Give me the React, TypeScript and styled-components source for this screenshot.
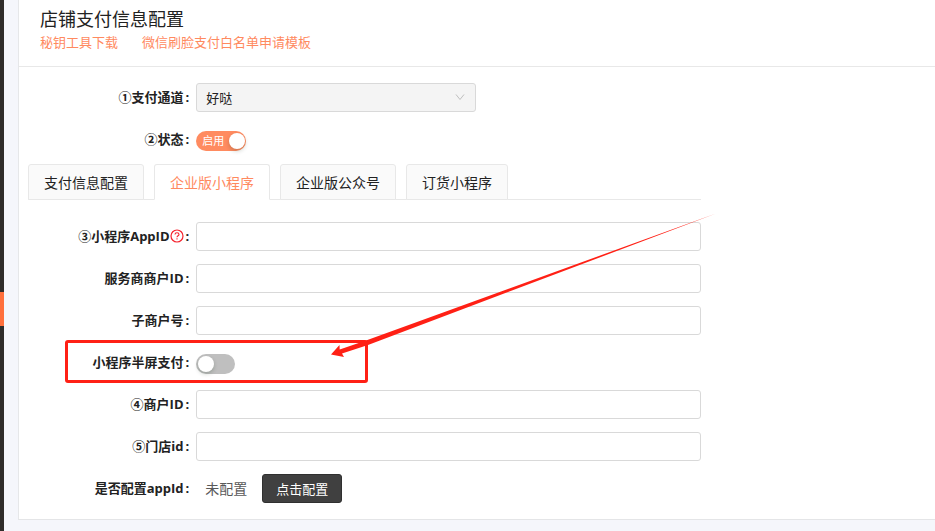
import React, { useState } from "react";
import styled, { createGlobalStyle } from "styled-components";

const GlobalStyle = createGlobalStyle`
  * { box-sizing: border-box; }
  body {
    margin: 0;
    background: #f5f6fb;
    color: #222;
    font-family: "Open Sans", "Noto Sans CJK SC", sans-serif;
    font-size: 13px;
    line-height: 20px;
  }
  button, input, select { font: inherit; }
`;

const Page = styled.div`
  display: flex;
  min-height: 100vh;
`;

const Rail = styled.nav`
  flex: 0 0 4px;
  padding-top: 292px;
  background: #2f2c2a;
`;

const RailMarker = styled.div`
  height: 34px;
  background: #ff6f3c;
`;

const Main = styled.main`
  flex: 1;
  min-width: 0;
  padding-left: 14px;
`;

const Card = styled.section`
  background: #fff;
  border-left: 1px solid #e6e7e9;
  border-bottom: 1px solid #e4e5e7;
`;

const CardHeader = styled.header`
  padding: 7px 21px 14px;
  border-bottom: 1px solid #e8e8e8;
`;

const Title = styled.h1`
  margin: 0;
  font-size: 18px;
  line-height: 25px;
  font-weight: 400;
`;

const Links = styled.div`
  display: flex;
  gap: 24px;
`;

const Link = styled.a`
  color: #ff8a5f;
  text-decoration: none;
`;

const Form = styled.form`
  max-width: 682px;
  padding: 10px 0 9px 9px;
`;

const Row = styled.div`
  position: relative;
  display: grid;
  grid-template-columns: 25% 1fr;
  padding: 6px 0 7px;
`;

const Label = styled.label`
  display: flex;
  justify-content: flex-end;
  align-items: center;
  height: 28px;
  padding-right: 7px;
  font-weight: 700;
  white-space: nowrap;

  &::after {
    content: ":";
    margin-left: 2px;
  }
`;

const Control = styled.div`
  display: flex;
  align-items: center;
  min-height: 29px;
`;

const TextInput = styled.input`
  width: 100%;
  height: 29px;
  padding: 0 9px;
  border: 1px solid #d9d9d9;
  border-radius: 3px;
  background: #fff;
  outline: none;
`;

const SelectBox = styled.div`
  position: relative;
  width: 280px;
`;

const Select = styled.select`
  display: block;
  width: 100%;
  height: 29px;
  padding: 0 30px 0 9px;
  border: 1px solid #d9d9d9;
  border-radius: 3px;
  background: #f4f4f4;
  color: #222;
  opacity: 1;
  appearance: none;
`;

const SelectArrow = styled.svg`
  position: absolute;
  top: 9px;
  right: 11px;
  pointer-events: none;
`;

const Switch = styled.span<{ $wide?: boolean }>`
  position: relative;
  display: inline-flex;
  width: ${(p) => (p.$wide ? 50 : 39)}px;
  height: 20px;
  margin-top: 2px;
`;

const SwitchInput = styled.input`
  appearance: none;
  width: 100%;
  height: 100%;
  margin: 0;
  border-radius: 10px;
  background: #bfbfbf;
  cursor: pointer;

  &:checked { background: #ff8b60; }

  &::after {
    content: "";
    position: absolute;
    top: 2px;
    left: 2px;
    width: 16px;
    height: 16px;
    border-radius: 50%;
    background: #fff;
    box-shadow: 0 2px 4px rgba(0, 35, 11, 0.2);
  }

  &:checked::after {
    left: auto;
    right: 1px;
  }
`;

const SwitchText = styled.span`
  position: absolute;
  left: 6px;
  top: 0;
  color: #fff;
  font-size: 11px;
  pointer-events: none;
`;

const Tabs = styled.div`
  display: flex;
  gap: 10px;
  margin: 3px 0 16px;
  box-shadow: inset 0 -1px #e8e8e8;
`;

const Tab = styled.button<{ $active: boolean }>`
  height: 36px;
  padding: 1px 15px 0;
  border: 1px solid #e8e8e8;
  border-bottom-color: ${(p) => (p.$active ? "#fff" : "#e8e8e8")};
  border-radius: 3px 3px 0 0;
  background: ${(p) => (p.$active ? "#fff" : "#fafafa")};
  color: ${(p) => (p.$active ? "#ff8a5f" : "#222")};
  font-size: 14px;
  white-space: nowrap;
  cursor: pointer;
`;

const StatusText = styled.span`
  padding: 0 15px 0 9px;
  color: #595959;
  font-size: 14px;
`;

const DarkButton = styled.button`
  height: 29px;
  padding: 0 13px;
  border: 1px solid #303030;
  border-radius: 3px;
  background: #404040;
  color: #fff;
  cursor: pointer;
`;

const Highlight = styled.div`
  position: absolute;
  top: -2px;
  left: 37px;
  width: 303px;
  height: 43px;
  border: 3px solid #ff2015;
  border-radius: 3px;
  pointer-events: none;
`;

const Pointer = styled.svg`
  position: absolute;
  left: 302px;
  bottom: 26px;
  pointer-events: none;
`;

const HelpIcon = () => (
  <svg width="14" height="14" viewBox="0 0 14 14" fill="none" stroke="#f5222d" aria-label="帮助">
    <circle cx="7" cy="7" r="6" strokeWidth="1.2" />
    <path d="M5 5.5C5 4.4 5.8 3.7 7 3.7s2 .7 2 1.7c0 1.4-2 1.4-2 2.9M7 9.3v1.2" strokeWidth="1.1" />
  </svg>
);

const tabs = ["支付信息配置", "企业版小程序", "企业版公众号", "订货小程序"];

function Field({ id, label, help }: { id: string; label: string; help?: boolean }) {
  return (
    <Row>
      <Label htmlFor={id}>
        {label}
        {help && <HelpIcon />}
      </Label>
      <Control>
        <TextInput id={id} type="text" />
      </Control>
    </Row>
  );
}

export default function App() {
  const [active, setActive] = useState(1);
  const [enabled, setEnabled] = useState(true);
  const [halfScreen, setHalfScreen] = useState(false);

  return (
    <>
      <GlobalStyle />
      <Page>
        <Rail>
          <RailMarker />
        </Rail>
        <Main>
          <Card>
            <CardHeader>
              <Title>店铺支付信息配置</Title>
              <Links>
                <Link href="#tool">秘钥工具下载</Link>
                <Link href="#template">微信刷脸支付白名单申请模板</Link>
              </Links>
            </CardHeader>
            <Form onSubmit={(e) => e.preventDefault()}>
              <Row>
                <Label htmlFor="channel">①支付通道</Label>
                <Control>
                  <SelectBox>
                    <Select id="channel" disabled>
                      <option>好哒</option>
                    </Select>
                    <SelectArrow width="10" height="10" viewBox="0 0 10 10" fill="none" stroke="#bfbfbf">
                      <path d="M1 2.5l4 5 4-5" />
                    </SelectArrow>
                  </SelectBox>
                </Control>
              </Row>
              <Row>
                <Label htmlFor="status">②状态</Label>
                <Control>
                  <Switch $wide>
                    <SwitchInput
                      id="status"
                      type="checkbox"
                      role="switch"
                      checked={enabled}
                      onChange={(e) => setEnabled(e.target.checked)}
                    />
                    {enabled && <SwitchText>启用</SwitchText>}
                  </Switch>
                </Control>
              </Row>
              <Tabs role="tablist">
                {tabs.map((name, i) => (
                  <Tab
                    key={name}
                    type="button"
                    role="tab"
                    aria-selected={active === i}
                    $active={active === i}
                    onClick={() => setActive(i)}
                  >
                    {name}
                  </Tab>
                ))}
              </Tabs>
              <Field id="appid" label="③小程序AppID" help />
              <Field id="provider" label="服务商商户ID" />
              <Field id="sub" label="子商户号" />
              <Row>
                <Label htmlFor="half">小程序半屏支付</Label>
                <Control>
                  <Switch>
                    <SwitchInput
                      id="half"
                      type="checkbox"
                      role="switch"
                      checked={halfScreen}
                      onChange={(e) => setHalfScreen(e.target.checked)}
                    />
                  </Switch>
                </Control>
                <Highlight />
                <Pointer width="388" height="146" viewBox="0 0 388 146">
                  <path
                    d="M1 142.5L9.5 133L9.7 137.5L36 128.5L386 1.5L38 133L12 141.5L14 145Z"
                    fill="#ff2015"
                  />
                </Pointer>
              </Row>
              <Field id="merchant" label="④商户ID" />
              <Field id="store" label="⑤门店id" />
              <Row>
                <Label htmlFor="configure">是否配置appId</Label>
                <Control>
                  <StatusText>未配置</StatusText>
                  <DarkButton id="configure" type="button">点击配置</DarkButton>
                </Control>
              </Row>
            </Form>
          </Card>
        </Main>
      </Page>
    </>
  );
}
